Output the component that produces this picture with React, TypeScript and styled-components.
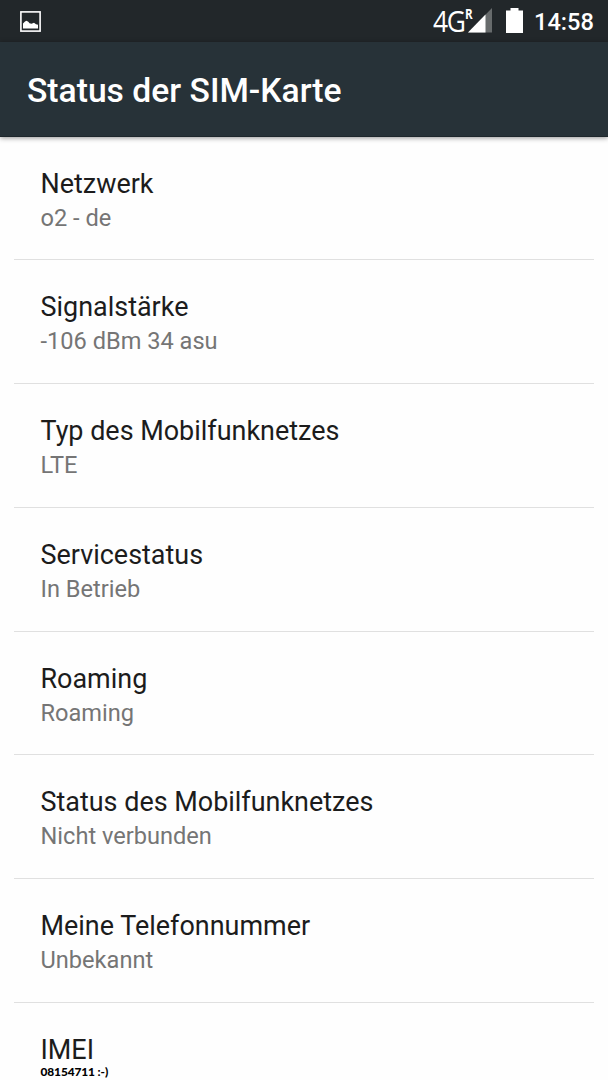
import React from 'react';
import styled, { createGlobalStyle } from 'styled-components';

const GlobalStyle = createGlobalStyle`
  * { box-sizing: border-box; }
  html, body { margin: 0; padding: 0; background: #fefefe; }
  body { font-family: Roboto, "Liberation Sans", sans-serif; height: 1080px; overflow: hidden; }
`;

const Screen = styled.div`
  width: 608px;
  height: 1080px;
  overflow: hidden;
  display: flex;
  flex-direction: column;
  background: #fefefe;
`;

const StatusBar = styled.div`
  flex: none;
  height: 42px;
  display: flex;
  align-items: center;
  justify-content: space-between;
  padding: 0 15px 0 20px;
  background: #22272a;
  color: #fff;
`;

const Indicators = styled.div`
  display: flex;
  align-items: flex-start;
  height: 42px;
`;

const NetworkType = styled.span`
  font-family: "Open Sans", sans-serif;
  font-size: 30px;
  line-height: 42px;
  letter-spacing: -1.5px;
  transform: scaleX(0.88);
  transform-origin: left;
  width: 31px;
  margin-right: 1px;
`;

const RoamingMark = styled.span`
  font-family: "Open Sans", sans-serif;
  font-size: 14.5px;
  font-weight: 700;
  line-height: 28px;
  width: 3px;
  white-space: nowrap;
  transform: scaleX(0.8);
  transform-origin: left;
`;

const SignalIcon = styled.svg`
  flex: none;
  width: 24px;
  height: 42px;
`;

const BatteryIcon = styled.svg`
  flex: none;
  width: 17px;
  height: 42px;
  margin-left: 14px;
`;

const Clock = styled.span`
  font-size: 23.6px;
  font-weight: 500;
  line-height: 45px;
  width: 59px;
  margin-left: 11px;
  white-space: nowrap;
`;

const ActionBar = styled.header`
  position: relative;
  flex: none;
  height: 95px;
  padding: 4px 27px 0;
  display: flex;
  align-items: center;
  background: #273238;
  border-bottom: 1px solid #1e272c;
  box-shadow: 0 1px 5px rgba(0, 0, 0, 0.42);
`;

const Title = styled.h1`
  margin: 0;
  font-size: 33.65px;
  font-weight: 500;
  line-height: 40px;
  color: #fff;
`;

const List = styled.div`
  flex: none;
  margin-top: -0.45px;
  padding: 0 14px;
`;

const Row = styled.div`
  height: 123.75px;
  padding: 30px 26.5px 0;
  border-bottom: 1.5px solid #e0e0e0;
`;

const Label = styled.div`
  font-size: 26.95px;
  line-height: 34px;
  color: #1c1c1c;
`;

const Value = styled.div`
  font-size: 23.6px;
  line-height: 34px;
  color: #757575;
`;

const Note = styled.div`
  margin-top: -2px;
  font-family: Lato, sans-serif;
  font-size: 11.9px;
  font-weight: 900;
  line-height: 13px;
  letter-spacing: -0.1px;
  color: #000;
`;

const entries: [string, string][] = [
  ['Netzwerk', 'o2 - de'],
  ['Signalstärke', '-106 dBm 34 asu'],
  ['Typ des Mobilfunknetzes', 'LTE'],
  ['Servicestatus', 'In Betrieb'],
  ['Roaming', 'Roaming'],
  ['Status des Mobilfunknetzes', 'Nicht verbunden'],
  ['Meine Telefonnummer', 'Unbekannt'],
];

export default function App() {
  return (
    <Screen>
      <GlobalStyle />
      <StatusBar>
        <svg width="21" height="21" viewBox="0 0 21 21">
          <rect x="0.9" y="0.9" width="19.2" height="19.2" fill="none" stroke="#fff" strokeWidth="1.6" />
          <path d="M3 17.5V12.4L5 10.4L6.5 9.8L8.3 10.8L9.5 12.3L11.5 12.8L14 11.8L16 13.2L18 13.8V17.5Z" fill="#fff" />
        </svg>
        <Indicators>
          <NetworkType>4G</NetworkType>
          <RoamingMark>R</RoamingMark>
          <SignalIcon viewBox="0 0 24 42">
            <path d="M0 32.5L24 8V32.5Z" fill="#676b6c" />
            <path d="M0 32.5L17.5 14.5V32.5Z" fill="#fff" />
          </SignalIcon>
          <BatteryIcon viewBox="0 0 17 42">
            <path d="M4.5 8H12.5V10.5H17V33H0V10.5H4.5Z" fill="#fff" />
          </BatteryIcon>
          <Clock>14:58</Clock>
        </Indicators>
      </StatusBar>
      <ActionBar>
        <Title>Status der SIM-Karte</Title>
      </ActionBar>
      <List>
        {entries.map(([label, value]) => (
          <Row key={label}>
            <Label>{label}</Label>
            <Value>{value}</Value>
          </Row>
        ))}
        <Row>
          <Label>IMEI</Label>
          <Note>08154711 :-)</Note>
        </Row>
      </List>
    </Screen>
  );
}
